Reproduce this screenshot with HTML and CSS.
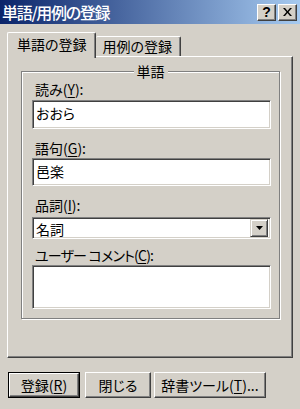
FILE: index.html
```html
<!DOCTYPE html>
<html lang="ja">
<head>
    <meta charset="UTF-8">
    <meta name="viewport" content="width=device-width, initial-scale=1.0">
    <title>単語/用例の登録</title>
    <link rel="stylesheet" href="styles.css">
</head>
<body>
    <div class="titlebar">
        <span class="title">単語/用例の登録</span>
        <div class="caption-btns">
            <div class="cap-btn help">?</div>
            <div class="cap-btn close">
                <svg width="9" height="8" viewBox="0 0 9 8"><path d="M0 0h2l2.5 3L7 0h2L5.5 4 9 8H7L4.5 5 2 8H0l3.5-4z" fill="#000"/></svg>
            </div>
        </div>
    </div>
    <div class="dialog">
        <div class="tabs">
            <div class="tab active">単語の登録</div>
            <div class="tab">用例の登録</div>
        </div>
        <div class="panel">
            <div class="group">
                <span class="legend">単語</span>
                <div class="field f1">
                    <div class="label">読み(<u>Y</u>):</div>
                    <div class="edit h29">おおら</div>
                </div>
                <div class="field f2">
                    <div class="label">語句(<u>G</u>):</div>
                    <div class="edit h28">邑楽</div>
                </div>
                <div class="field f3">
                    <div class="label">品詞(<u>I</u>):</div>
                    <div class="combo">
                        <span class="combo-text">名詞</span>
                        <div class="combo-btn"><svg width="7" height="4" viewBox="0 0 7 4"><path d="M0 0h7L3.5 4z" fill="#000"/></svg></div>
                    </div>
                </div>
                <div class="field f4">
                    <div class="label tight">ユーザー コメント(<u>C</u>):</div>
                    <div class="edit memo"></div>
                </div>
            </div>
        </div>
        <div class="buttons">
            <div class="btn default"><span class="btn-face">登録(<u>R</u>)</span></div>
            <div class="btn w66"><span class="btn-face">閉じる</span></div>
            <div class="btn w112"><span class="btn-face">辞書ツール(<u>T</u>)...</span></div>
        </div>
    </div>
</body>
</html>
```

FILE: styles.css
```css
body { margin: 0; width: 300px; height: 409px; overflow: hidden; background: #d4d0c8; font-family: "Noto Sans CJK JP", sans-serif; font-size: 14px; color: #000; font-feature-settings: "palt"; }
u { text-decoration-thickness: 1px; text-underline-offset: 2px; }

.titlebar { height: 24px; display: flex; align-items: center; justify-content: space-between; background: linear-gradient(to right, #0a246a, #a6caf0); padding: 0 3px 0 2px; }
.title { color: #fff; font-size: 16px; line-height: 18px; font-weight: 500; letter-spacing: -1.3px; }
.caption-btns { display: flex; gap: 2px; }
.cap-btn { width: 17px; height: 15px; display: flex; align-items: center; justify-content: center; background: #d4d0c8; border: 1px solid; border-color: #fff #404040 #404040 #fff; box-shadow: inset -1px -1px #808080; font-weight: bold; font-size: 14px; line-height: 14px; font-family: "Liberation Sans", sans-serif; }

.dialog { padding: 8px 7px 0 7px; }
.tabs { display: flex; align-items: flex-end; height: 24px; position: relative; z-index: 1; }
.tab { height: 19px; padding: 0 8px 0 7px; border: 1px solid; border-bottom: none; border-color: #fff #404040 #404040 #fff; box-shadow: inset -1px 0 #808080; border-radius: 2px 2px 0 0; line-height: 19px; background: #d4d0c8; }
.tab.active { height: 25px; margin-bottom: -2px; padding: 0 8px 0 9px; line-height: 22px; }
.tab + .tab { border-left: none; }

.panel { height: 302px; box-sizing: border-box; border: 1px solid; border-color: #fff #404040 #404040 #fff; box-shadow: inset -1px -1px #808080; padding: 14px 12px 0 13px; }
.group { position: relative; height: 248px; box-sizing: border-box; border: 1px solid #808080; box-shadow: 1px 1px 0 #fff, inset 1px 1px 0 #fff; padding: 9px 8px 0 10px; }
.legend { position: absolute; left: 50%; top: -10px; transform: translateX(-50%); padding: 0 3px; background: #d4d0c8; line-height: 18px; }

.label { height: 16px; line-height: 16px; padding-left: 3px; margin-bottom: 3px; }
.label.tight { letter-spacing: -0.8px; }
.f1 { margin-bottom: 11px; }
.f2 { margin-bottom: 11px; }
.f2 .label { margin-bottom: 2px; }
.f3 { margin-bottom: 8px; }
.f3 .label { margin-bottom: 4px; }
.f4 .label { margin-bottom: 2px; }

.edit { background: #fff; border: 1px solid; border-color: #808080 #fff #fff #808080; box-shadow: inset 1px 1px #404040, inset -1px -1px #d4d0c8; padding: 3px 3px 0 3px; line-height: 18px; box-sizing: border-box; }
.h29 { height: 29px; }
.h28 { height: 28px; }
.memo { height: 44px; }

.combo { display: flex; justify-content: space-between; height: 22px; box-sizing: border-box; background: #fff; border: 1px solid; border-color: #808080 #fff #fff #808080; box-shadow: inset 1px 1px #404040, inset -1px -1px #d4d0c8; padding: 1px 2px 2px 3px; }
.combo-text { line-height: 18px; padding-top: 1px; }
.combo-btn { width: 18px; height: 18px; box-sizing: border-box; display: flex; align-items: center; justify-content: center; background: #d4d0c8; border: 1px solid; border-color: #d4d0c8 #404040 #404040 #d4d0c8; box-shadow: inset 1px 1px #fff, inset -1px -1px #808080; }

.buttons { display: flex; margin-top: 14px; padding-left: 1px; }
.btn { height: 26px; box-sizing: border-box; margin-right: 5px; border: 1px solid; border-color: #fff #404040 #404040 #fff; box-shadow: inset -1px -1px #808080; display: flex; }
.btn-face { flex: 1; display: flex; align-items: center; justify-content: center; line-height: 18px; }
.btn.default { width: 72px; border: 1px solid #000; box-shadow: none; }
.btn.default .btn-face { border: 1px solid; border-color: #fff #404040 #404040 #fff; box-shadow: inset -1px -1px #808080; }
.w66 { width: 66px; margin-right: 3px; }
.w112 { width: 112px; }
```
